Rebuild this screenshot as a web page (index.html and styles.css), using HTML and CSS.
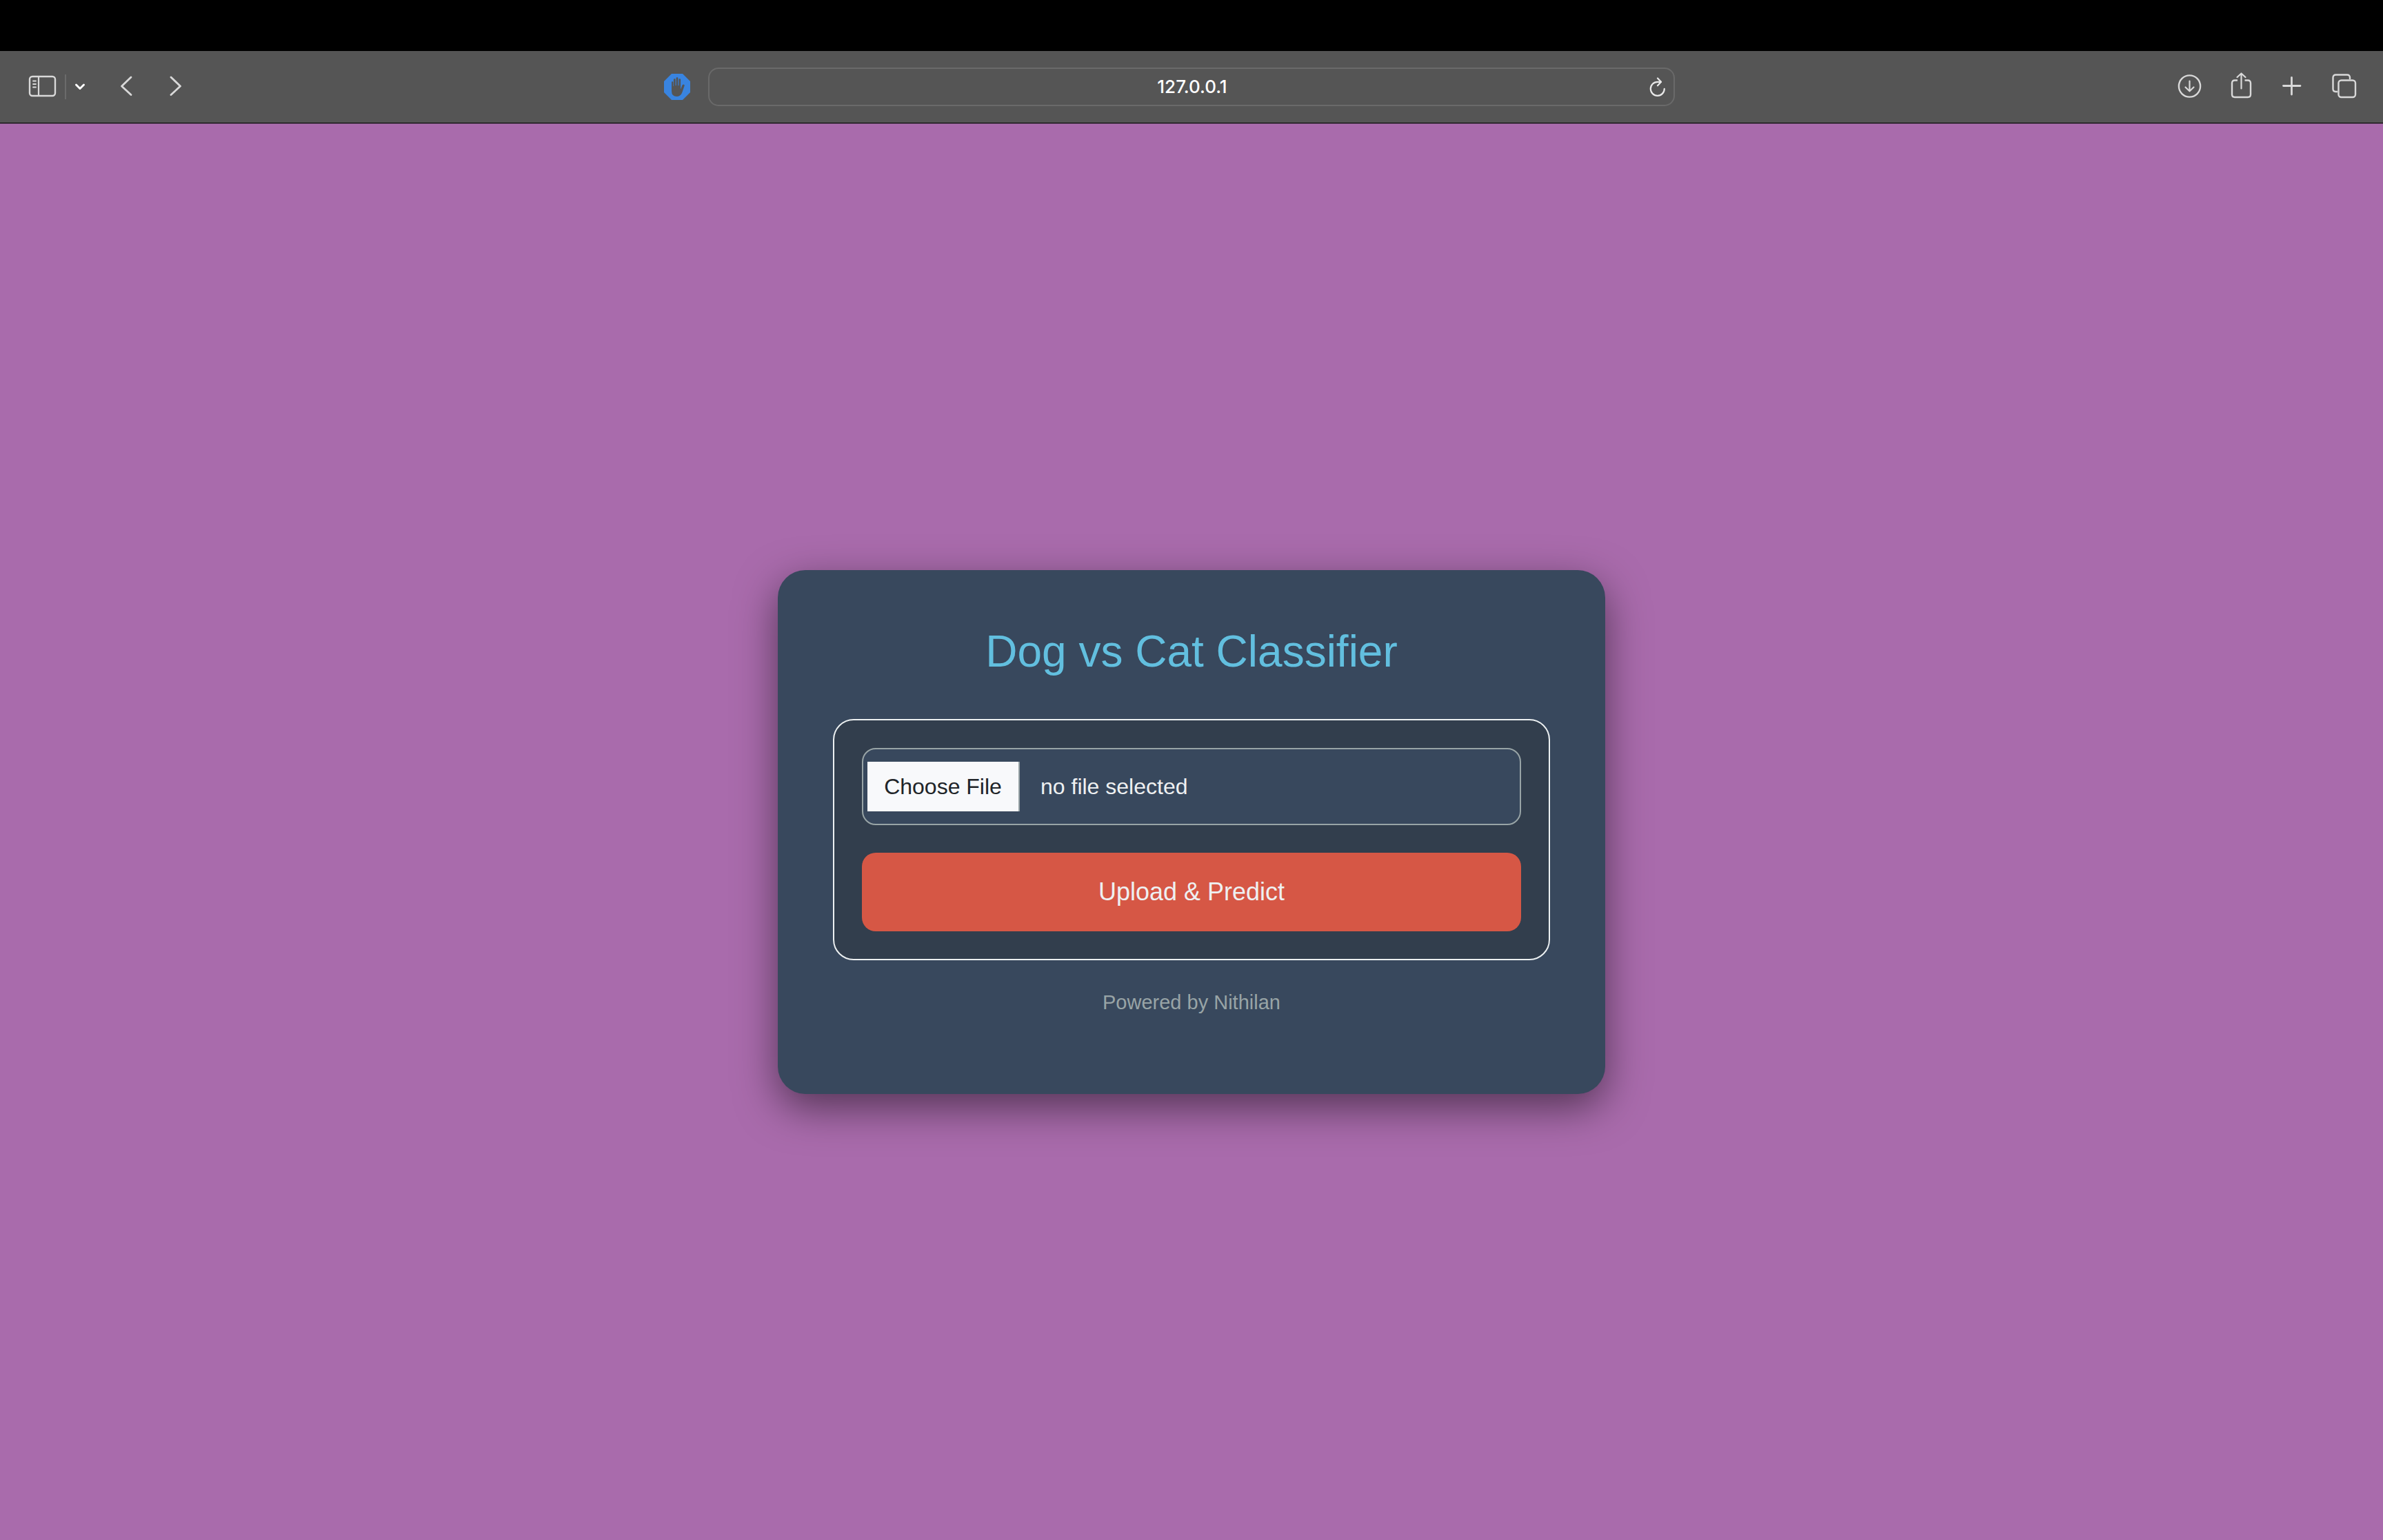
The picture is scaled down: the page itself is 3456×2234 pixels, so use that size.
FILE: index.html
```html
<!DOCTYPE html>
<html lang="en">
<head>
  <meta charset="utf-8">
  <meta name="viewport" content="width=device-width, initial-scale=1">
  <title>Dog vs Cat Classifier</title>
  <link rel="stylesheet" href="styles.css">
</head>
<body>
  <div class="menu-strip"></div>
  <header class="toolbar">
    <div class="toolbar-start">
      <div class="nav">
        <button class="tool" type="button" aria-label="Show sidebar">
          <svg class="icon" width="44" height="44" viewBox="0 0 44 44">
            <rect x="3" y="7" width="37" height="28" rx="4" stroke-width="2.4"/>
            <path d="M16 7V35" stroke-width="2.2"/>
            <path d="M8 13.500H12M8 18H12M8 22.500H12" stroke-width="1.800"/>
          </svg>
        </button>
        <span class="divider"></span>
        <button class="tool" type="button" aria-label="Tab groups">
          <svg class="icon icon-bright" width="20" height="44" viewBox="0 0 20 44">
            <path d="M4.500 19L10 24.500L15.500 19" stroke-width="3"/>
          </svg>
        </button>
        <div class="history">
          <button class="tool" type="button" aria-label="Back">
            <svg class="icon" width="24" height="44" viewBox="0 0 24 44">
              <path d="M19 8L5.500 21L19 33.500" stroke-width="2.800"/>
            </svg>
          </button>
          <button class="tool" type="button" aria-label="Forward">
            <svg class="icon" width="24" height="44" viewBox="0 0 24 44">
              <path d="M5 8L18.500 21L5 33.500" stroke-width="2.800"/>
            </svg>
          </button>
        </div>
      </div>
      <button class="tool" type="button" aria-label="Content blocker">
        <svg width="40" height="44" viewBox="0 0 40 44">
          <path class="blocker-plate" d="M12 3H28L39 14V30L28 41H12L1 30V14Z"/>
          <path class="blocker-hand" d="M12 15.500Q12 14 13.100 14T14.300 15.500V21H14.900V11.500Q14.900 10 16.300 10T17.600 11.500V20H18.600V9.500Q18.600 8 20 8T21.400 9.500V20H22.500V11.500Q22.500 10 23.800 10T25.100 11.500V25.500Q26.500 22.500 27.400 19.800Q28 18.400 29.500 18.400Q31.200 18.700 30.600 20.500L27.500 29.500Q25.500 36 19.800 36Q12 36 12 28Z"/>
        </svg>
      </button>
    </div>
    <div class="address">
      <input class="address-input" type="text" value="127.0.0.1" aria-label="Address">
      <button class="tool" type="button" aria-label="Reload">
        <svg class="icon icon-light" width="28" height="44" viewBox="0 0 28 44">
          <path d="M23.800 24.800A10 10 0 1 1 13.800 14.800H19" stroke-width="2.200"/>
          <path d="M14 9.500L19 14.800L14 20.200" stroke-width="2.200"/>
        </svg>
      </button>
    </div>
    <div class="toolbar-end">
      <button class="tool" type="button" aria-label="Downloads">
        <svg class="icon" width="40" height="44" viewBox="0 0 40 44">
          <circle cx="20.500" cy="21" r="15.600" stroke-width="2.400"/>
          <path d="M20.500 13.500V28M14.500 22.500L20.500 28.300L26.500 22.500" stroke-width="2.200"/>
        </svg>
      </button>
      <button class="tool" type="button" aria-label="Share">
        <svg class="icon" width="40" height="44" viewBox="0 0 40 44">
          <path d="M15 12.500H11Q7 12.500 7 16.500V33Q7 37 11 37H30Q34 37 34 33V16.500Q34 12.500 30 12.500H25.500" stroke-width="2.400" stroke-linecap="butt"/>
          <path d="M20.500 24.500V3M14.500 8L20.500 2.500L26.500 8" stroke-width="2.200"/>
        </svg>
      </button>
      <button class="tool" type="button" aria-label="New tab">
        <svg class="icon" width="40" height="44" viewBox="0 0 40 44">
          <path d="M18.500 8.500V33M6.500 20.500H31" stroke-width="2.800"/>
        </svg>
      </button>
      <button class="tool" type="button" aria-label="Tab overview">
        <svg class="icon" width="40" height="44" viewBox="0 0 40 44">
          <path d="M28 11V8.500Q28 4.500 24 4.500H7.500Q3.500 4.500 3.500 8.500V25Q3.500 29 7.500 29H10" stroke-width="2.400" stroke-linecap="butt"/>
          <rect x="11.500" y="12.500" width="24.500" height="24.500" rx="4" stroke-width="2.400"/>
        </svg>
      </button>
    </div>
  </header>
  <main class="page">
    <section class="card">
      <h1 class="title">Dog vs Cat Classifier</h1>
      <form class="upload">
        <div class="file-field">
          <input class="file-input" type="file" id="image" accept="image/*">
          <label class="file-name" for="image">no file selected</label>
        </div>
        <button class="submit" type="submit">Upload &amp; Predict</button>
      </form>
      <p class="credit">Powered by Nithilan</p>
    </section>
  </main>
</body>
</html>
```

FILE: styles.css
```css
*,
*::before,
*::after {
  box-sizing: border-box;
}

body {
  margin: 0;
  min-height: 100vh;
  display: flex;
  flex-direction: column;
  background: #a96bac;
  font-family: "Liberation Sans", Arial, sans-serif;
}

/* Browser chrome */
.menu-strip {
  height: 74px;
  background: #000;
}

.toolbar {
  display: grid;
  grid-template-columns: 1fr minmax(0, 1402px) 1fr;
  align-items: center;
  min-height: 105px;
  background: #555;
  border-bottom: 1px solid #000;
  box-shadow: 0 1px 0 #86608a;
}

.toolbar-start {
  display: flex;
  align-items: center;
  justify-content: space-between;
  padding: 0 25px 0 40px;
}

.nav {
  display: flex;
  align-items: center;
  gap: 10px;
}

.history {
  display: flex;
  gap: 48px;
  margin-left: 35px;
}

.divider {
  width: 2px;
  height: 36px;
  background: #6b6b6b;
}

.toolbar-end {
  display: flex;
  align-items: center;
  justify-content: flex-end;
  gap: 35px;
  padding-right: 36px;
}

.tool {
  display: flex;
  padding: 0;
  border: 0;
  background: none;
}

.icon {
  fill: none;
  stroke: #d9d9d9;
  stroke-linecap: round;
  stroke-linejoin: round;
}

.icon-light {
  stroke: #e9e9e9;
}

.icon-bright {
  stroke: #fff;
}

.blocker-plate {
  fill: #3984e0;
}

.blocker-hand {
  fill: #555;
}

.address {
  display: flex;
  align-items: center;
  height: 56px;
  padding: 0 9px 0 39px;
  border: 2px solid #6a6a6a;
  border-radius: 15px;
}

.address-input {
  flex: 1;
  min-width: 0;
  padding: 0;
  border: 0;
  background: none;
  color: #fff;
  font: 500 26px/32px Inter, sans-serif;
  text-align: center;
}

/* Page */
.page {
  flex: 1;
  display: flex;
  align-items: center;
  justify-content: center;
}

.card {
  width: 100%;
  max-width: 1200px;
  padding: 80px;
  border-radius: 40px;
  background: #38485d;
  box-shadow: 0 20px 60px rgba(0, 0, 0, 0.5);
  text-align: center;
}

.title {
  margin: 0 0 60px;
  color: #62bfdf;
  font-size: 64px;
  font-weight: 400;
  line-height: 76px;
}

.upload {
  display: flex;
  flex-direction: column;
  gap: 40px;
  padding: 40px;
  border: 2px solid #ecf0f1;
  border-radius: 30px;
  background: #323e4d;
}

.file-field {
  display: flex;
  align-items: center;
  gap: 30px;
  padding: 18px 6px;
  border: 2px solid #98a4a6;
  border-radius: 20px;
  background: #38485d;
  color: #eef0f1;
  font-size: 32px;
  line-height: 46px;
}

/* The native status text is replaced by .file-name */
.file-input {
  width: 221px;
  height: 72px;
  overflow: hidden;
  color: transparent;
  font-size: 0;
}

.file-input::file-selector-button {
  width: 221px;
  height: 72px;
  margin: 0;
  padding: 12px 24px;
  border: 0 solid #98a4a6;
  border-right-width: 2px;
  border-radius: 0;
  background: #f8f9fb;
  color: #212529;
  font: 32px/48px "Liberation Sans", Arial, sans-serif;
}

.submit {
  padding: 30px;
  border: 0;
  border-radius: 20px;
  background: #d65745;
  color: #eef0f1;
  font: 36px/54px "Liberation Sans", Arial, sans-serif;
}

.credit {
  margin: 40px 0 32px;
  color: #98a4a6;
  font-size: 29px;
  line-height: 42px;
}
```
